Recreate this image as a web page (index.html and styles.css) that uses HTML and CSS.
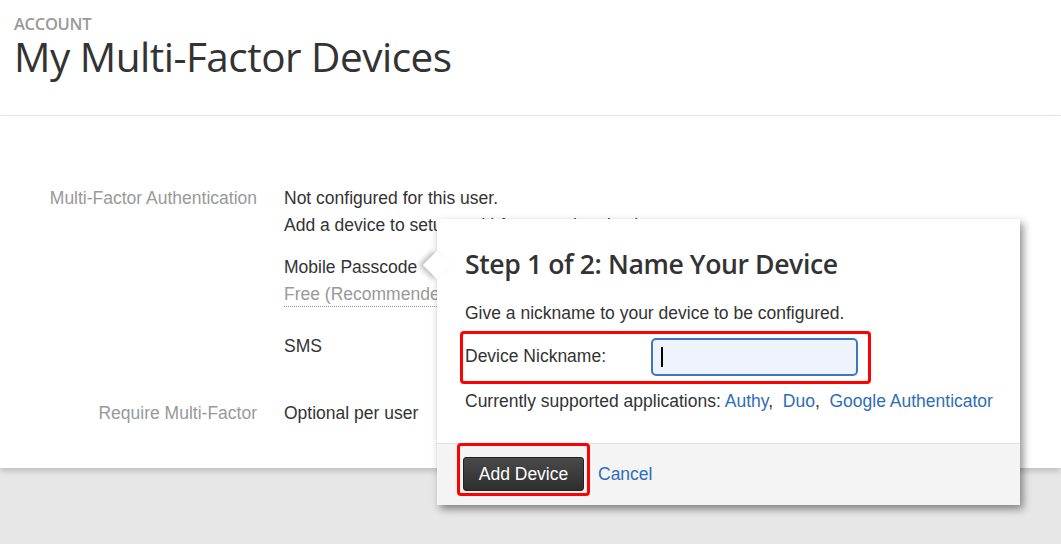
FILE: index.html
```html
<!DOCTYPE html>
<html>
<head>
<meta charset="utf-8">
<link rel="stylesheet" href="styles.css">
</head>
<body>
<div class="page">
  <header class="header">
    <div class="eyebrow">ACCOUNT</div>
    <h1 class="title">My Multi-Factor Devices</h1>
  </header>
  <main class="content">
    <div class="rows">
      <div class="label">Multi-Factor Authentication</div>
      <div class="value">
        <div class="line">Not configured for this user.</div>
        <div class="line">Add a device to setup multi-factor authentication.</div>
        <div class="device">
          <div class="line">Mobile Passcode</div>
          <div class="line muted"><span class="dotted">Free (Recommended)</span></div>
        </div>
        <div class="device sms">
          <div class="line">SMS</div>
        </div>
      </div>
      <div class="label second">Require Multi-Factor</div>
      <div class="value second">
        <div class="line">Optional per user</div>
      </div>
    </div>

    <div class="popover">
      <div class="arrow"></div>
      <div class="pop-body">
        <h2 class="pop-title">Step 1 of 2: Name Your Device</h2>
        <p class="pop-text">Give a nickname to your device to be configured.</p>
        <div class="nick">
          <label class="nick-label">Device Nickname:</label>
          <div class="input"><span class="caret"></span></div>
        </div>
        <p class="apps">Currently supported applications: <a class="link">Authy</a>,&nbsp; <a class="link">Duo</a>,&nbsp; <a class="link">Google Authenticator</a></p>
      </div>
      <div class="pop-footer">
        <div class="btn-mark"><button class="btn">Add Device</button></div>
        <a class="link cancel">Cancel</a>
      </div>
    </div>
  </main>
</div>
</body>
</html>
```

FILE: styles.css
```css
html, body {
  margin: 0;
  padding: 0;
}
body {
  background: #e7e7e7;
  font-family: "Liberation Sans", Arial, sans-serif;
  color: #333;
  height: 544px;
  overflow: hidden;
}
.header {
  background: #fff;
  border-bottom: 1px solid #ececec;
  padding: 14px 14px 0;
  box-sizing: border-box;
  height: 116px;
}
.eyebrow {
  font-family: "Open Sans", sans-serif;
  font-weight: 600;
  font-size: 16.5px;
  line-height: 19px;
  color: #999;
  letter-spacing: -0.3px;
}
.title {
  margin: 3px 0 0;
  font-family: "Open Sans", sans-serif;
  font-weight: 400;
  font-size: 40.5px;
  line-height: 42px;
  color: #333;
  letter-spacing: -0.5px;
}
.content {
  position: relative;
  background: #fff;
  height: 352px;
  box-shadow: 0 3px 6px rgba(0,0,0,0.18);
}
.rows {
  display: grid;
  grid-template-columns: 257px 1fr;
  column-gap: 27px;
  padding-top: 69px;
  font-size: 17.5px;
  line-height: 27px;
}
.label {
  text-align: right;
  color: #999;
}
.second {
  margin-top: 40px;
}
.device {
  margin-top: 15px;
}
.device.sms {
  margin-top: 25px;
}
.muted {
  color: #999;
}
.dotted {
  border-bottom: 1px dotted #999;
  padding-bottom: 2px;
}
.popover {
  position: absolute;
  left: 437px;
  top: 103px;
  width: 583px;
  background: #fff;
  box-shadow: 3px 4px 8px rgba(0,0,0,0.45);
}
.arrow {
  position: absolute;
  left: -10px;
  top: 36px;
  width: 20px;
  height: 20px;
  background: #fff;
  transform: rotate(45deg);
  box-shadow: -3px 3px 5px rgba(0,0,0,0.25);
}
.pop-body {
  position: relative;
  padding: 25px 20px 31px 28px;
}
.pop-title {
  margin: 0;
  font-family: "Open Sans", sans-serif;
  font-weight: 600;
  font-size: 26.6px;
  line-height: 40px;
  color: #333;
  letter-spacing: -0.4px;
}
.pop-text {
  margin: 18px 0 0;
  font-size: 17.5px;
  line-height: 22px;
}
.nick {
  display: flex;
  align-items: center;
  width: 411px;
  box-sizing: border-box;
  height: 53px;
  margin: 7px 0 0 -5px;
  border: 3px solid #f00;
  border-radius: 4px;
  padding-left: 2px;
  font-size: 17.5px;
}
.nick-label {
  width: 186px;
  margin-top: -3px;
}
.input {
  width: 207px;
  height: 38px;
  box-sizing: border-box;
  border: 2px solid #3b78c2;
  border-radius: 5px;
  background: #eef3fc;
  display: flex;
  align-items: center;
  padding-left: 8px;
  margin-top: -2px;
}
.caret {
  width: 2px;
  height: 20px;
  background: #000;
}
.apps {
  margin: 6px 0 0;
  font-size: 17.5px;
  line-height: 22px;
  white-space: nowrap;
}
.link {
  color: #2e6db8;
  text-decoration: none;
}
.pop-footer {
  background: #f4f4f4;
  border-top: 1px solid #e2e2e2;
  height: 61px;
  display: flex;
  align-items: flex-start;
  padding-left: 20px;
}
.btn-mark {
  margin-top: -1px;
  border: 3px solid #f00;
  border-radius: 4px;
  padding: 11px 3px 2px 3px;
}
.btn {
  display: block;
  width: 121px;
  height: 34px;
  border: 1px solid #222;
  border-radius: 3px;
  background: linear-gradient(#4a4a4a, #2e2e2e);
  color: #fff;
  font-family: "Liberation Sans", Arial, sans-serif;
  font-size: 17.5px;
  padding: 0;
}
.cancel {
  margin: 19px 0 0 8px;
  font-size: 17.5px;
  line-height: 22px;
}
```
